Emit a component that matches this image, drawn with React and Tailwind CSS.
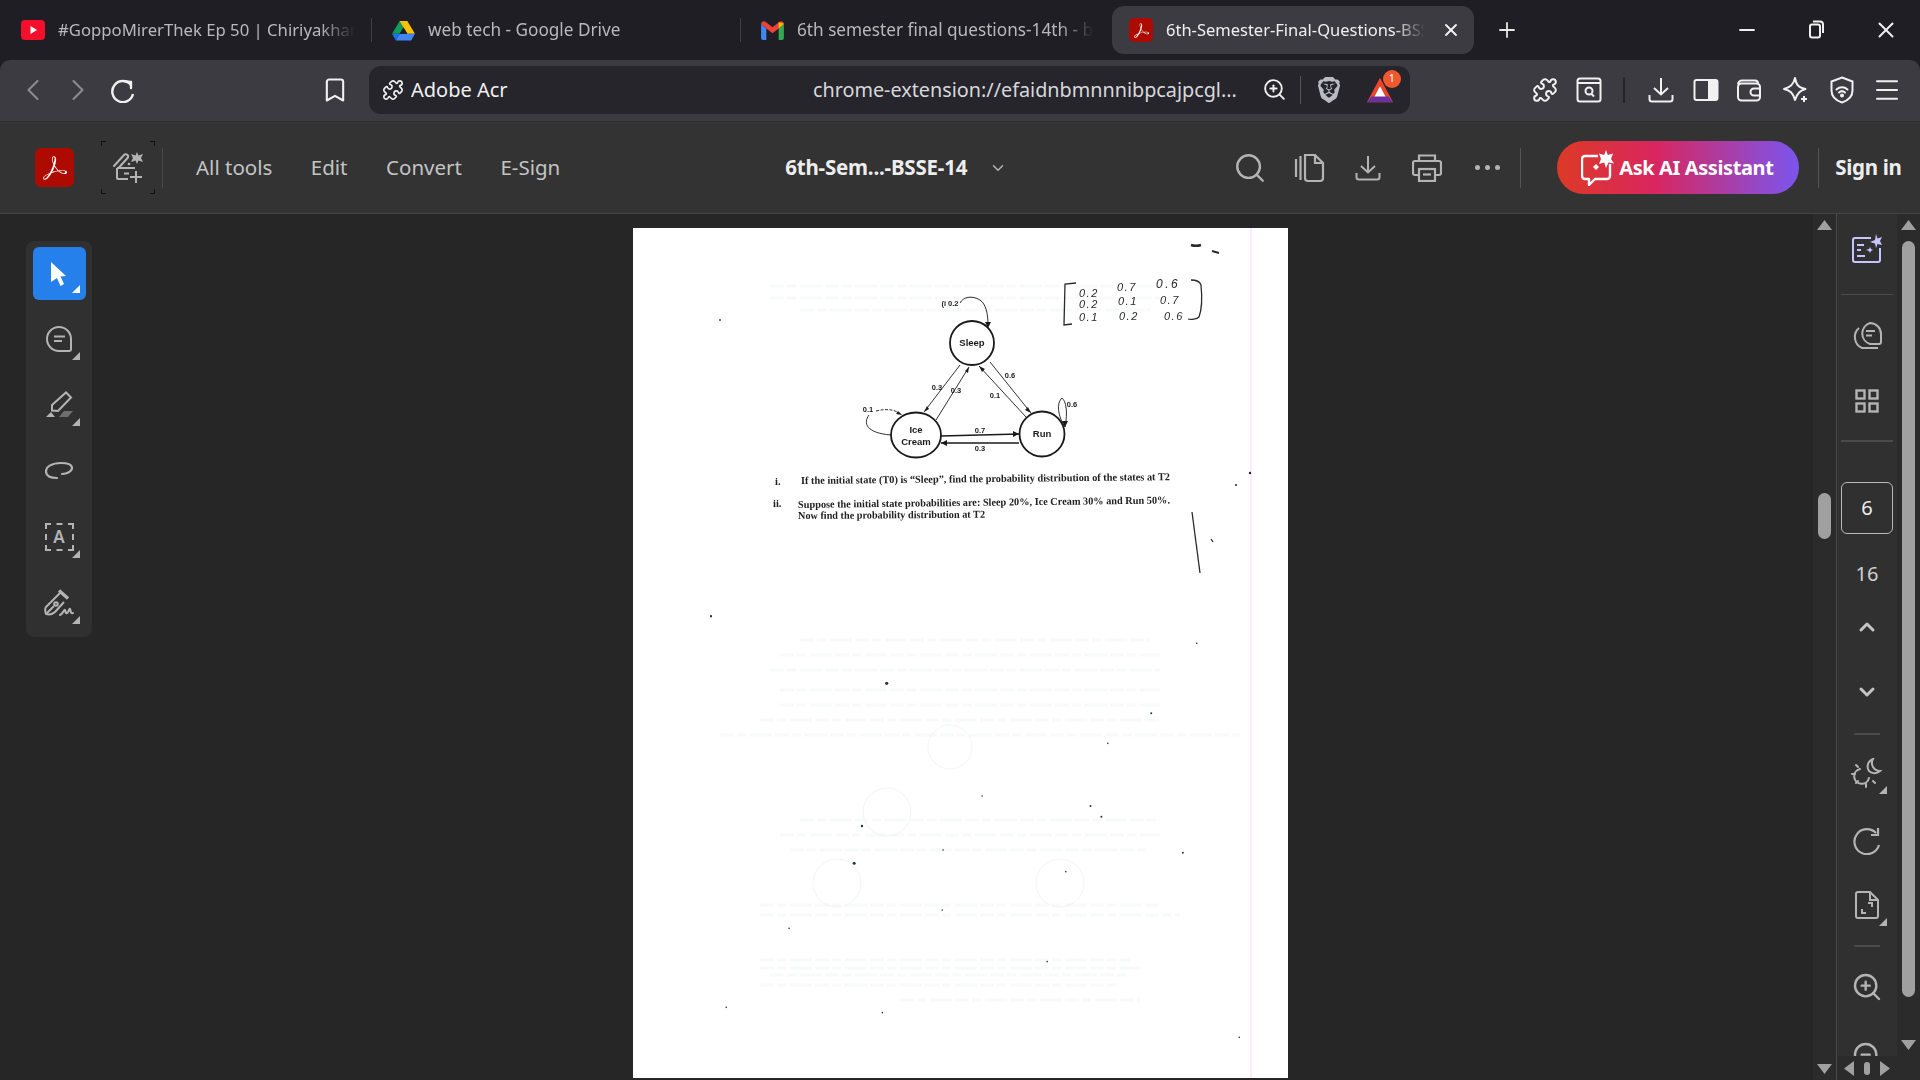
import { ChevronLeft, ChevronRight, Bookmark, Puzzle, ZoomIn, ZoomOut, Menu, Search, X, Plus, Minus, ChevronUp, ChevronDown } from "lucide-react";
import { SiAdobeacrobatreader, SiBrave } from "react-icons/si";

const FADE = "[mask-image:linear-gradient(to_right,black_88%,transparent)]";

function Corner({ light, pos }) {
  return (
    <svg viewBox="0 0 8 8" className={`absolute w-[8px] h-[8px] ${pos}`}>
      <polygon points="8,0 8,8 0,8" fill={light ? "#ffffff" : "#b4b4b4"} />
    </svg>
  );
}

function Acrobat({ size, box }) {
  return (
    <div className={`flex items-center justify-center bg-[#ad0b00] rounded-[5px] ${box}`}>
      <SiAdobeacrobatreader size={size} color="#fff" />
    </div>
  );
}

function YoutubeIcon() {
  return (
    <svg viewBox="0 0 24 20" className="w-[24px] h-[20px] shrink-0">
      <rect width="24" height="20" rx="4" fill="#f40f2c" />
      <polygon points="9.5,6 9.5,14 16,10" fill="#fff" />
    </svg>
  );
}

function DriveIcon() {
  return (
    <svg viewBox="0 0 24 22" className="w-[23px] h-[21px] shrink-0">
      <polygon points="8,1 16,1 8,14.5 0,14.5" fill="#0f9d58" />
      <polygon points="8,1 16,1 24,14.5 16,14.5" fill="#ffc107" />
      <polygon points="8,14.5 24,14.5 20,21.5 4,21.5" fill="#4285f4" />
      <polygon points="0,14.5 8,14.5 4,21.5" fill="#1a73e8" />
      <polygon points="8,14.5 16,14.5 12,8" fill="#1e1e24" />
    </svg>
  );
}

function GmailIcon() {
  return (
    <svg viewBox="0 0 24 20" className="w-[23px] h-[19px] shrink-0">
      <path d="M0 3v15a2 2 0 0 0 2 2h3.500V8z" fill="#4285f4" />
      <path d="M24 3v15a2 2 0 0 1-2 2h-3.500V8z" fill="#34a853" />
      <path d="M0 3c0-2.500 3-3.600 5-2l7 5.600L19 1c2-1.600 5-.5 5 2l-5.500 5L12 13 5.500 8z" fill="#ea4335" />
      <path d="M18.500 1.300L24 3l-5.500 5z" fill="#fbbc04" />
    </svg>
  );
}

function ReloadIcon() {
  return (
    <svg viewBox="0 0 26 26" fill="none" stroke="#f1f1f1" strokeWidth="2.400" className="w-[26px] h-[26px]">
      <path d="M21 8A10.500 10.500 0 1 0 23 17" />
      <path d="M15.500 4.500L21 5v6" strokeLinecap="round" strokeLinejoin="round" />
    </svg>
  );
}

function TabDivider() {
  return <span className="w-px h-[24px] bg-[#3d3d43] shrink-0" />;
}

function Tab({ icon, title, width, textWidth, pad, size }) {
  return (
    <div className={`flex items-center h-full shrink-0 gap-[13px] ${pad} ${width}`}>
      {icon}
      <span className={`text-[#b9b9bd] whitespace-nowrap overflow-hidden ${size} ${textWidth} ${FADE}`}>{title}</span>
    </div>
  );
}

function TabStrip() {
  return (
    <div className="h-[60px] flex items-center bg-[#1e1e24] shrink-0">
      <Tab pad="pl-[21px]" size="text-[16.700px]" width="w-[371px]" textWidth="w-[297px]" icon={<YoutubeIcon />} title="#GoppoMirerThek Ep 50 | Chiriyakhana Season" />
      <TabDivider />
      <Tab pad="pl-[20px]" size="text-[17.200px]" width="w-[368px]" textWidth="w-[290px]" icon={<DriveIcon />} title="web tech - Google Drive" />
      <TabDivider />
      <Tab pad="pl-[20px]" size="text-[17.200px]" width="w-[371px]" textWidth="w-[297px]" icon={<GmailIcon />} title="6th semester final questions-14th - bsse14@iit.du" />
      <div className="flex items-center w-[362px] h-[48px] bg-[#3b3b41] rounded-[12px] pl-[17px] gap-[13px] shrink-0">
        <Acrobat size={15} box="w-[24px] h-[24px] shrink-0" />
        <span className={`text-[16.500px] text-[#f0f0f0] whitespace-nowrap overflow-hidden w-[259px] ${FADE}`}>6th-Semester-Final-Questions-BSSE-14.pdf</span>
        <X size={20} color="#f5f5f5" strokeWidth={2.200} className="ml-[3px]" />
      </div>
      <Plus size={24} color="#e8e8e8" strokeWidth={1.800} className="ml-[21px]" />
      <div className="ml-auto flex items-center pr-[21px] gap-[45px]">
        <Minus size={24} color="#f0f0f0" strokeWidth={1.800} />
        <svg viewBox="0 0 24 24" fill="none" stroke="#f0f0f0" strokeWidth="2" className="w-[24px] h-[24px]">
          <rect x="6" y="6.500" width="10" height="13" rx="2" />
          <path d="M9 3.500h7a3 3 0 0 1 3 3V15" />
        </svg>
        <X size={26} color="#f0f0f0" strokeWidth={1.800} />
      </div>
    </div>
  );
}

function WalletIcon() {
  return (
    <svg viewBox="0 0 26 26" fill="none" stroke="#f1f1f1" strokeWidth="2" className="w-[26px] h-[26px]">
      <path d="M2 7.500A4 4 0 0 1 6 3.500h13a3 3 0 0 1 3 3" />
      <rect x="2" y="6.500" width="22" height="17" rx="3.500" />
      <path d="M24 11.500h-6a3 3 0 0 0 0 7h6" />
    </svg>
  );
}

function StarIcon() {
  return (
    <svg viewBox="0 0 28 28" fill="none" stroke="#f1f1f1" strokeWidth="2" strokeLinejoin="round" className="w-[28px] h-[28px]">
      <path d="M13 2c1.300 7 3.500 9.500 10.500 11-5 1.300-8 3.500-10.500 11-2-7.500-5-9.700-11-11 6-1.500 9.500-4 11-11z" />
      <path d="M22 20v6M19 23h6" />
    </svg>
  );
}

function VpnIcon() {
  return (
    <svg viewBox="0 0 26 28" fill="none" stroke="#f1f1f1" strokeWidth="2" className="w-[26px] h-[28px]">
      <path d="M13 1.500l10.500 4v9c0 6-4.500 10-10.500 12-6-2-10.500-6-10.500-12v-9z" />
      <path d="M7.500 13.500a8 8 0 0 1 11 0M10 16.500a4.500 4.500 0 0 1 6 0" strokeLinecap="round" />
      <circle cx="13" cy="19.500" r="1" fill="#f1f1f1" />
    </svg>
  );
}

function TrayDownload({ size, color }) {
  return (
    <svg viewBox="0 0 26 26" fill="none" stroke={color} strokeWidth="2" className={size}>
      <path d="M13 1v16M6 11l7 6.500 7-6.500" />
      <path d="M1.500 18v4a2.500 2.500 0 0 0 2.500 2.500h18a2.500 2.500 0 0 0 2.500-2.500v-4" />
    </svg>
  );
}

function NavBar() {
  return (
    <div className="h-[62px] pb-[2px] flex items-center bg-[#3b3b41] rounded-t-[10px] border-b border-[#2f2f33] shrink-0 text-[#f1f1f1]">
      <ChevronLeft size={36} color="#8c8c90" strokeWidth={1.400} className="ml-[15px]" />
      <ChevronRight size={36} color="#8c8c90" strokeWidth={1.400} className="ml-[9px]" />
      <div className="ml-[14px]"><ReloadIcon /></div>
      <Bookmark size={28} strokeWidth={1.800} className="ml-[185px]" />
      <div className="ml-[20px] w-[1041px] h-[48px] bg-[#25252b] rounded-[12px] flex items-center pl-[13px]">
        <Puzzle size={22} strokeWidth={1.800} />
        <span className="ml-[7px] w-[97px] text-[20px] whitespace-nowrap overflow-hidden">Adobe Acrobat</span>
        <span className="ml-[305px] text-[19.800px] text-[#d8d8dc] whitespace-nowrap">chrome-extension://efaidnbmnnnibpcajpcgl...</span>
        <ZoomIn size={25} strokeWidth={1.800} className="ml-[25px]" />
        <span className="ml-[13px] w-px h-[28px] bg-[#55555a]" />
        <SiBrave size={26} color="#b9bac4" className="ml-[15px]" />
        <div className="relative ml-[24px] w-[28px] h-[28px]">
          <svg viewBox="0 0 30 30" className="w-[28px] h-[28px]">
            <polygon points="15,2 29,28 1,28" fill="#e8452c" />
            <polygon points="15,11 22,24 8,24" fill="#fff" />
            <polygon points="6,22 24,22 29,28 1,28" fill="#6b2f9e" />
          </svg>
          <span className="absolute top-[-6px] right-[-7px] w-[18px] h-[18px] rounded-full bg-[#f0592f] text-white text-[10px] flex items-center justify-center">1</span>
        </div>
      </div>
      <div className="ml-[122px]"><Puzzle size={26} strokeWidth={1.800} /></div>
      <svg viewBox="0 0 26 26" fill="none" stroke="#f1f1f1" strokeWidth="2" className="w-[26px] h-[26px] ml-[18px]">
        <rect x="1.500" y="1.500" width="23" height="23" rx="2.500" />
        <path d="M1.500 6h23" />
        <circle cx="13" cy="14" r="3.500" />
        <path d="M15.500 17l2.500 2.500" />
      </svg>
      <span className="ml-[21px] w-[2px] h-[26px] bg-[#26262a]" />
      <div className="ml-[23px]"><TrayDownload size="w-[26px] h-[26px]" color="#f1f1f1" /></div>
      <svg viewBox="0 0 26 26" className="w-[26px] h-[26px] ml-[19px]">
        <rect x="1.500" y="3" width="23" height="20" rx="2" fill="none" stroke="#f1f1f1" strokeWidth="2" />
        <rect x="15" y="3" width="9.500" height="20" fill="#f1f1f1" />
      </svg>
      <div className="ml-[17px]"><WalletIcon /></div>
      <div className="ml-[20px]"><StarIcon /></div>
      <div className="ml-[19px]"><VpnIcon /></div>
      <Menu size={30} strokeWidth={1.600} className="ml-[17px]" />
    </div>
  );
}

function FillSign() {
  return (
    <div className="relative w-[54px] h-[53px] flex items-center justify-center">
      <span className="absolute left-0 top-0 w-[5px] h-[5px] border-l border-t border-[#111]" />
      <span className="absolute right-0 top-0 w-[5px] h-[5px] border-r border-t border-[#111]" />
      <span className="absolute left-0 bottom-0 w-[5px] h-[5px] border-l border-b border-[#111]" />
      <span className="absolute right-0 bottom-0 w-[5px] h-[5px] border-r border-b border-[#111]" />
      <svg viewBox="0 0 32 32" fill="none" stroke="#b4b4b4" strokeWidth="2" className="w-[32px] h-[32px]">
        <path d="M2 14L12 3a2.200 2.200 0 0 1 3.500 3L7 15.500" strokeLinecap="round" />
        <path d="M5 16h18M5 16v10a1 1 0 0 0 1 1h10" />
        <path d="M12 21.500h5M24 19v12M18 25h12" />
        <circle cx="17" cy="12" r="1.300" fill="#b4b4b4" stroke="none" />
        <path d="M25 0l1.500 3.500L31 2l-2 4 2 4-4.500-1.500L25 12l-1.500-3.500L19 10l2-4-2-4 4.500 1.500z" fill="#b4b4b4" stroke="none" />
      </svg>
    </div>
  );
}

function AskAiIcon() {
  return (
    <svg viewBox="0 0 34 36" fill="none" stroke="#fff" strokeWidth="2.400" strokeLinejoin="round" className="w-[34px] h-[36px]">
      <path d="M17 6H4a3 3 0 0 0-3 3v17a3 3 0 0 0 3 3h4v6l6-6h12a3 3 0 0 0 3-3V14" />
      <path d="M25 0l1.800 5L32 3.500 30 9l3 4.500-5.500-1L25 18l-1.800-5.500L18 14l2-5-2-5.500 5.200 1.500z" fill="#fff" stroke="none" />
      <path d="M15 14l3 3-3 3-3-3z" fill="#fff" stroke="none" />
    </svg>
  );
}

function AppBar() {
  return (
    <div className="h-[92px] flex items-center bg-[#333333] border-b border-[#444444] shrink-0">
      <Acrobat size={24} box="ml-[35px] w-[39px] h-[39px] rounded-[6px]" />
      <div className="ml-[27px]"><FillSign /></div>
      <span className="ml-[7px] w-px h-[40px] bg-[#484848]" />
      <nav className="ml-[33px] flex items-center gap-[38.500px] text-[20.500px] text-[#c4c4c4]">
        <span>All tools</span>
        <span>Edit</span>
        <span>Convert</span>
        <span>E-Sign</span>
      </nav>
      <span className="ml-[225px] text-[20.500px] font-bold text-[#ededed] whitespace-nowrap tracking-[-0.2px]">6th-Sem...-BSSE-14</span>
      <ChevronDown size={18} color="#b4b4b4" strokeWidth={2} className="ml-[22px]" />
      <Search size={34} color="#b4b4b4" strokeWidth={1.700} className="ml-[226px]" />
      <svg viewBox="0 0 32 32" fill="none" stroke="#b4b4b4" strokeWidth="2.200" className="w-[32px] h-[32px] ml-[27px]">
        <path d="M2 7v18M6.500 4v24" />
        <path d="M11 3h10l8 8v15a3 3 0 0 1-3 3H14a3 3 0 0 1-3-3z" />
        <path d="M21 3v8h8" />
      </svg>
      <div className="ml-[29px]"><TrayDownload size="w-[26px] h-[26px]" color="#b4b4b4" /></div>
      <svg viewBox="0 0 30 28" fill="none" stroke="#b4b4b4" strokeWidth="2.200" className="w-[30px] h-[28px] ml-[31px]">
        <path d="M7 7V1.500h16V7" />
        <path d="M7 21H3a2 2 0 0 1-2-2V9a2 2 0 0 1 2-2h24a2 2 0 0 1 2 2v10a2 2 0 0 1-2 2h-4" />
        <rect x="7" y="15" width="16" height="12" />
        <path d="M11 20.500h8" />
      </svg>
      <div className="ml-[33px] flex gap-[5px]">
        <span className="w-[5px] h-[5px] rounded-full bg-[#b4b4b4]" />
        <span className="w-[5px] h-[5px] rounded-full bg-[#b4b4b4]" />
        <span className="w-[5px] h-[5px] rounded-full bg-[#b4b4b4]" />
      </div>
      <span className="ml-[20px] w-px h-[40px] bg-[#555555]" />
      <div className="ml-[36px] w-[242px] h-[53px] rounded-full flex items-center pl-[24px] gap-[4px] bg-[linear-gradient(90deg,#dc3a26_0%,#d9265e_40%,#7a55ee_100%)]">
        <AskAiIcon />
        <span className="text-[20px] font-bold text-white whitespace-nowrap tracking-[-0.4px]">Ask AI Assistant</span>
      </div>
      <span className="ml-[19px] w-px h-[40px] bg-[#555555]" />
      <span className="ml-[16px] text-[20.500px] font-bold text-[#ededed] whitespace-nowrap tracking-[-0.3px]">Sign in</span>
    </div>
  );
}

const tools = [
  <svg key="c" viewBox="0 0 28 28" fill="none" stroke="#b4b4b4" strokeWidth="2" className="w-[28px] h-[28px]">
    <path d="M14 2a12 12 0 1 0 0 24h10a2 2 0 0 0 2-2V14A12 12 0 0 0 14 2z" />
    <path d="M9 11.500h11M9 16h8" />
  </svg>,
  <svg key="h" viewBox="0 0 28 28" fill="none" stroke="#b4b4b4" strokeWidth="2" className="w-[28px] h-[28px]">
    <path d="M7 14L21 1.500l5 5L13 20l-6-.5z" />
    <polygon points="1,26 6,21 10,26" fill="#b4b4b4" stroke="none" />
    <polygon points="14,26 19,20 28,20 23,26" fill="#6f6f6f" stroke="none" />
  </svg>,
  <svg key="l" viewBox="0 0 28 24" fill="none" stroke="#b4b4b4" strokeWidth="2.200" strokeLinecap="round" className="w-[28px] h-[28px]">
    <path d="M17 15c5 0 10-2.500 10-6 0-4-5-5-11-5C7 4 1 7.500 1 12.500 1 17 6 19 12 19" />
  </svg>,
  <div key="a" className="w-[29px] h-[28px] flex items-center justify-center border-2 border-dashed border-[#b4b4b4] text-[#b4b4b4] text-[17px] font-semibold">A</div>,
  <svg key="p" viewBox="0 0 30 28" fill="none" stroke="#b4b4b4" strokeWidth="2" strokeLinejoin="round" className="w-[30px] h-[28px]">
    <path d="M16 4L2 18c-1.500 2-1 4 0 7 4 1 7 0 9-2L20 13" />
    <path d="M15 1.500l9 8" strokeWidth="3.200" />
    <path d="M2 25l8-8" />
    <circle cx="12" cy="15" r="1.800" />
    <path d="M16 26c3-1 4-6 5-5s0 4 2 3 2-5 3-4 0 5 3 4" strokeLinecap="round" />
  </svg>,
];

function LeftTools() {
  return (
    <div className="w-[66px] h-[396px] rounded-[8px] bg-[#303030] flex flex-col items-center pt-[6px]">
      <div className="relative w-[53px] h-[53px] mb-[6px] rounded-[6px] bg-[#2680eb] flex items-center justify-center shrink-0">
        <svg viewBox="0 0 16 24" className="w-[16px] h-[24px]">
          <polygon points="0,0 15,14 9.500,14.500 13,22 9.500,24 6,16 0,20" fill="#fff" />
        </svg>
        <Corner light pos="right-[6px] bottom-[7px]" />
      </div>
      {tools.map((icon) => (
        <div key={icon.key} className="relative w-[53px] h-[66px] flex items-center justify-center shrink-0">
          {icon}
          {icon.key !== "l" && <Corner pos="right-[6px] bottom-[12px]" />}
        </div>
      ))}
    </div>
  );
}

// specks of the scan, in coordinates of the crop they were read from
const dots = [
  [210, 50, 0.8], [1330, 130, 0.8], [615, 250, 1.600], [1225, 340, 1], [1125, 430, 0.8], [1085, 618, 1], [1110, 650, 1],
  [558, 678, 1.200], [1298, 758, 1], [540, 790, 1.500], [1028, 815, 0.8], [743, 930, 0.8], [390, 985, 0.8], [985, 1085, 0.8],
  [245, 1222, 0.8], [1428, 1312, 0.8], [605, 1238, 0.8], [835, 588, 0.8], [745, 750, 0.8],
];

const ghostLines = [
  [770, 1160, 286], [770, 1160, 298], [800, 1150, 310], [800, 1150, 640], [780, 1160, 655], [770, 1160, 670], [780, 1160, 690], [780, 1160, 705],
  [760, 1160, 720], [720, 1240, 735], [800, 1160, 820], [780, 1160, 835], [790, 1150, 850], [760, 1160, 905], [760, 1180, 915],
  [760, 1130, 960], [760, 1140, 968], [770, 1130, 975], [760, 1120, 985], [900, 1140, 1000],
];

function PageScan() {
  return (
    <svg viewBox="633 228 655 850" className="w-[655px] h-[850px] blur-[0.4px]" fontFamily="'Liberation Sans', sans-serif">
      <rect x="633" y="228" width="655" height="850" fill="#fff" />
      <path d="M1251 228v850" stroke="#fde6f4" strokeWidth="1.500" />
      {ghostLines.map(([a, b, y]) => (
        <path key={y} d={`M${a} ${y}H${b}`} stroke="#f8f9f9" strokeWidth="3" strokeDasharray="14 3 9 4 22 3" />
      ))}
      <g fill="none" stroke="#f3f5f5">
        <circle cx="950" cy="747" r="22" />
        <circle cx="887" cy="812" r="24" />
        <circle cx="837" cy="883" r="24" />
        <circle cx="1060" cy="883" r="24" />
      </g>
      {dots.map(([x, y, r]) => (
        <circle key={`${x}-${y}`} cx={620 + x / 2.306} cy={600 + y / 3} r={r} fill="#26383c" />
      ))}
      <circle cx="720" cy="320" r="1" fill="#445" />
      <circle cx="1250" cy="473" r="1.200" fill="#222" />
      <circle cx="1236" cy="485" r="1" fill="#222" />
      <circle cx="711" cy="616" r="1" fill="#222" />

      <g fill="none" stroke="#1a1a1a">
        <circle cx="972" cy="343" r="22" strokeWidth="1.800" />
        <ellipse cx="916" cy="435" rx="25" ry="22.500" strokeWidth="1.800" />
        <circle cx="1042" cy="434" r="22.500" strokeWidth="1.800" />
        <g strokeWidth="0.900">
          <path d="M960 303c3-6 12-8 20-3 6 4 8 14 8 25" />
          <path d="M960 365L924 412M936 420L969 367M990 362L1031 413M1026 417L979 366" />
          <path d="M876 411c12-3 20-1 26 4" strokeDasharray="3 1.500" />
          <path d="M869 415c-6 8-3 18 22 20" />
          <path d="M1065 427c-7-10-9-24-3-29 4 3 6 14 3 29" />
          <path d="M941 436L1019 434" strokeWidth="1.300" />
          <path d="M941 443L1019 443" strokeWidth="1.300" />
        </g>
      </g>
      <g fill="#1a1a1a">
        <polygon points="988,328 985,322 991,322" />
        <polygon points="924,412 927,406 929,409" />
        <polygon points="969,367 968,373 965,371" />
        <polygon points="1031,413 1025,410 1028,407" />
        <polygon points="979,366 985,369 982,372" />
        <polygon points="902,415 896,414 898,411" />
        <polygon points="1065,427 1062,421 1068,421" />
        <polygon points="1019,434 1013,431 1013,437" />
        <polygon points="941,443 947,440 947,446" />
      </g>
      <g fontSize="9.500" fontWeight="700" fill="#1a1a1a" textAnchor="middle">
        <text x="972" y="346">Sleep</text>
        <text x="916" y="433">Ice</text>
        <text x="916" y="445">Cream</text>
        <text x="1042" y="437">Run</text>
      </g>
      <g fontSize="7.500" fontWeight="700" fill="#1a1a1a" textAnchor="middle">
        <text x="950" y="306">(i 0.2</text>
        <text x="1010" y="378">0.6</text>
        <text x="937" y="390">0.3</text>
        <text x="956" y="393">0.3</text>
        <text x="995" y="398">0.1</text>
        <text x="868" y="412">0.1</text>
        <text x="1072" y="407">0.6</text>
        <text x="980" y="433">0.7</text>
        <text x="980" y="451">0.3</text>
      </g>

      <g fontFamily="'Liberation Serif', serif" fontSize="10.500" fontWeight="700" fill="#222">
        <text x="775" y="485">i.</text>
        <text x="801" y="484" textLength="369" lengthAdjust="spacingAndGlyphs" transform="rotate(-0.6 801 484)">If the initial state (T0) is “Sleep”, find the probability distribution of the states at T2</text>
        <text x="773" y="507">ii.</text>
        <text x="798" y="508" textLength="372" lengthAdjust="spacingAndGlyphs" transform="rotate(-0.7 798 508)">Suppose the initial state probabilities are: Sleep 20%, Ice Cream 30% and Run 50%.</text>
        <text x="798" y="519" textLength="187" lengthAdjust="spacingAndGlyphs" transform="rotate(-0.4 798 519)">Now find the probability distribution at T2</text>
      </g>

      <g fontStyle="italic" fontSize="11" fill="#2a2a2a" letterSpacing="1.500">
        <text x="1079" y="297">0.2</text>
        <text x="1079" y="308">0.2</text>
        <text x="1079" y="321">0.1</text>
        <text x="1117" y="291">0.7</text>
        <text x="1118" y="305">0.1</text>
        <text x="1119" y="320">0.2</text>
        <text x="1156" y="288" fontSize="12" letterSpacing="2.500">0.6</text>
        <text x="1160" y="304">0.7</text>
        <text x="1164" y="320">0.6</text>
      </g>
      <g fill="none" stroke="#2a2a2a" strokeWidth="1.300">
        <path d="M1076 283l-11 1-1 41 8-1" />
        <path d="M1191 280c5 0 9 2 10 5 1 10 1 24-2 32-2 2-8 3-11 2" />
        <path d="M1191 245c3 1 7 1 10 0" strokeWidth="2.500" />
        <path d="M1212 251l7 2" strokeWidth="2" />
        <path d="M1192 512l8 61" />
        <path d="M1211 539l2 3" />
      </g>
    </svg>
  );
}

function Arrow({ dir }) {
  const pts = { up: "0,10 7.500,0 15,10", down: "0,0 15,0 7.500,10", left: "10,0 10,15 0,7.500", right: "0,0 0,15 10,7.500" };
  const cls = dir === "up" || dir === "down" ? "w-[15px] h-[10px]" : "w-[10px] h-[15px]";
  const box = dir === "up" || dir === "down" ? "0 0 15 10" : "0 0 10 15";
  return (
    <svg viewBox={box} className={cls}>
      <polygon points={pts[dir]} fill="#a0a0a0" />
    </svg>
  );
}

function PanelSlot({ height, children }) {
  return <div className={`relative w-full flex items-center justify-center shrink-0 ${height}`}>{children}</div>;
}

function RightPanel() {
  return (
    <div className="w-[61px] flex flex-col border-l border-[#4a4a4a] bg-[#303030] shrink-0 overflow-hidden">
      <div className="flex-1 flex flex-col items-center overflow-hidden min-h-0">
        <PanelSlot height="h-[80px]">
          <svg viewBox="0 0 30 30" fill="none" stroke="#c7c5ff" strokeWidth="2" className="w-[30px] h-[30px] mt-[-10px]">
            <path d="M19 4H3a2 2 0 0 0-2 2v20a2 2 0 0 0 2 2h23a2 2 0 0 0 2-2V14" />
            <path d="M5 11h7M5 16h4M5 22h8" />
            <path d="M14 16l3-1 1-2 1 2 2 1-2 1-1 2-1-2z" fill="#c7c5ff" stroke="none" />
            <path d="M24 0l1.500 4.500L30 3l-2 4 2 4-4.500-1L24 14l-1-4.500L18 8l5-2z" fill="#c7c5ff" stroke="none" />
          </svg>
        </PanelSlot>
        <span className="w-[52px] h-px bg-[#4a4a4a] shrink-0" />
        <PanelSlot height="h-[82px]">
          <svg viewBox="0 0 30 28" fill="none" stroke="#b4b4b4" strokeWidth="2" className="w-[30px] h-[28px]">
            <path d="M18 1a11 11 0 0 0 0 21h9a2 2 0 0 0 2-2V12A11 11 0 0 0 18 1z" />
            <path d="M14 9h9M14 13.500h6" />
            <path d="M7 6a12 12 0 0 0 3 20h16" />
          </svg>
        </PanelSlot>
        <PanelSlot height="h-[48px]">
          <svg viewBox="0 0 24 24" fill="none" stroke="#b4b4b4" strokeWidth="2.400" className="w-[24px] h-[24px]">
            <rect x="1.500" y="1.500" width="8" height="8" />
            <rect x="14.500" y="1.500" width="8" height="8" />
            <rect x="1.500" y="14.500" width="8" height="8" />
            <rect x="14.500" y="14.500" width="8" height="8" />
          </svg>
        </PanelSlot>
        <span className="mt-[15px] w-[52px] h-[2px] bg-[#4a4a4a] shrink-0" />
        <div className="mt-[40px] w-[52px] h-[52px] rounded-[6px] border border-[#b8b8b8] flex items-center justify-center text-[20px] text-[#ededed] shrink-0">6</div>
        <div className="mt-[27px] h-[26px] flex items-center text-[20px] text-[#d0d0d0] shrink-0">16</div>
        <PanelSlot height="h-[80px]"><ChevronUp size={24} color="#c4c4c4" strokeWidth={3} /></PanelSlot>
        <PanelSlot height="h-[50px]"><ChevronDown size={24} color="#c4c4c4" strokeWidth={3} /></PanelSlot>
        <span className="mt-[16px] w-[26px] h-[2px] bg-[#4a4a4a] shrink-0" />
        <PanelSlot height="h-[76px]">
          <svg viewBox="0 0 32 30" fill="none" stroke="#b4b4b4" strokeWidth="2" strokeLinecap="round" className="w-[32px] h-[30px]">
            <path d="M9 11a7.500 7.500 0 1 0 9 9" />
            <path d="M1 16h3M5 7l2 2M5 25l2-2M15 26v3M24 25l-2-2" />
            <path d="M22 1a8 8 0 0 0 7 12 8 8 0 0 1-11 0 8 8 0 0 1 4-12z" />
          </svg>
          <Corner pos="right-[10px] bottom-[17px]" />
        </PanelSlot>
        <PanelSlot height="h-[60px]">
          <svg viewBox="0 0 28 28" fill="none" stroke="#b4b4b4" strokeWidth="2.200" className="w-[28px] h-[28px]">
            <path d="M26 18a12.500 12.500 0 1 1-3-12" />
            <path d="M25 1v7h-7" />
          </svg>
        </PanelSlot>
        <PanelSlot height="h-[68px]">
          <svg viewBox="0 0 24 28" fill="none" stroke="#b4b4b4" strokeWidth="2" className="w-[24px] h-[28px]">
            <path d="M3 1h12l8 8v16a2 2 0 0 1-2 2H3a2 2 0 0 1-2-2V3a2 2 0 0 1 2-2z" />
            <path d="M15 1v8h8" />
            <path d="M13 12h4v4M11 22H7v-4" />
          </svg>
          <Corner pos="right-[10px] bottom-[13px]" />
        </PanelSlot>
        <span className="mt-[6px] w-[26px] h-[2px] bg-[#4a4a4a] shrink-0" />
        <PanelSlot height="h-[80px]"><ZoomIn size={32} color="#b4b4b4" strokeWidth={1.800} /></PanelSlot>
        <PanelSlot height="h-[58px]"><ZoomOut size={32} color="#b4b4b4" strokeWidth={1.800} /></PanelSlot>
      </div>
      <div className="h-[24px] flex items-center justify-center gap-[10px] bg-[#2b2b2b] shrink-0">
        <Arrow dir="left" />
        <span className="w-[6px] h-[13px] rounded-[3px] bg-[#a0a0a0]" />
        <Arrow dir="right" />
      </div>
    </div>
  );
}

function MainArea() {
  return (
    <div className="flex-1 flex bg-[#262626] overflow-hidden min-h-0">
      <aside className="w-[633px] pl-[26px] pt-[27px] shrink-0">
        <LeftTools />
      </aside>
      <div className="pt-[14px] shrink-0"><PageScan /></div>
      <div className="w-[525px] shrink-0" />
      <div className="w-[23px] bg-[#2b2b2b] flex flex-col items-center shrink-0 pt-[6px] pb-[6px]">
        <Arrow dir="up" />
        <div className="mt-[263px] w-[13px] h-[46px] rounded-full bg-[#a0a0a0]" />
        <div className="mt-auto"><Arrow dir="down" /></div>
      </div>
      <RightPanel />
      <div className="w-[23px] bg-[#2b2b2b] flex flex-col items-center shrink-0 pt-[6px] pb-[30px]">
        <Arrow dir="up" />
        <div className="mt-[11px] w-[13px] flex-1 rounded-full bg-[#a0a0a0]" />
        <div className="mt-[43px]"><Arrow dir="down" /></div>
      </div>
    </div>
  );
}

export default function App() {
  return (
    <div className="w-[1920px] h-[1080px] flex flex-col overflow-hidden bg-[#1e1e24] font-['Noto_Sans','Open_Sans',sans-serif]">
      <TabStrip />
      <NavBar />
      <AppBar />
      <MainArea />
    </div>
  );
}
